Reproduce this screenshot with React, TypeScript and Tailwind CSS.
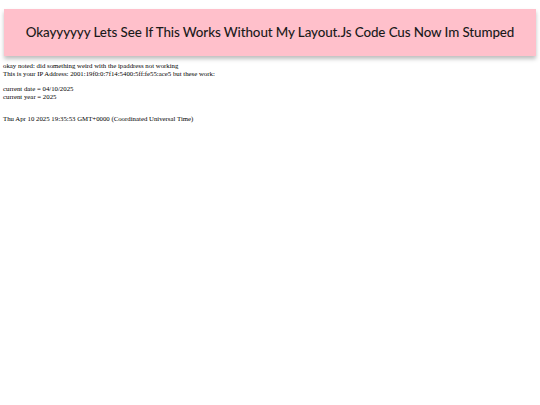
export default function App() {
  return (
    <div className="min-h-screen bg-white">
      <div className="px-[4px] pt-[9px]">
        <div className="bg-[#ffc0cb] h-[47px] flex items-center justify-center shadow-[0_3px_4px_rgba(0,0,0,0.25)]">
          <h1 className="text-[13.4px] text-[#1a1a1a] tracking-[-0.1px] font-['Lato','Open_Sans',sans-serif] font-medium">
            Okayyyyyy Lets See If This Works Without My Layout.Js Code Cus Now Im Stumped
          </h1>
        </div>
      </div>
      <div className="px-[3px] pt-[6px] font-['Liberation_Serif',serif] text-[6.8px] leading-[7.7px] text-black">
        <p>okay noted: did something weird with the ipaddress not working</p>
        <p>This is your IP Address: 2001:19f0:0:7f14:5400:5ff:fe55:ace5 but these work:</p>
        <p className="mt-[7.7px]">current date = 04/10/2025</p>
        <p>current year = 2025</p>
        <p className="mt-[14.5px]">Thu Apr 10 2025 19:35:53 GMT+0000 (Coordinated Universal Time)</p>
      </div>
    </div>
  );
}
